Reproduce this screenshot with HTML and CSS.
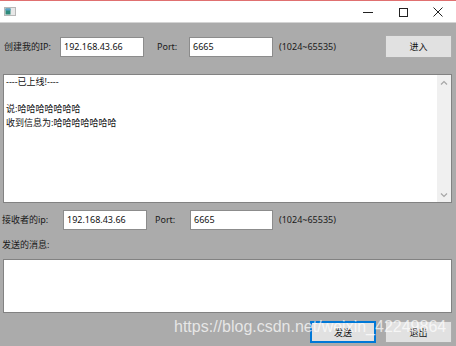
FILE: index.html
```html
<!DOCTYPE html>
<html>
<head>
<meta charset="utf-8">
<link rel="stylesheet" href="styles.css">
</head>
<body>
<div class="window">
  <div class="titlebar">
    <svg class="app-icon" width="12" height="9" viewBox="0 0 12 9">
      <rect x="0.5" y="0.5" width="11" height="8" fill="#e8e8e8" stroke="#b8b8b8"/>
      <rect x="1.5" y="1.5" width="5" height="6" fill="#2e8a7a"/>
      <rect x="1.5" y="1.5" width="5" height="2" fill="#5aa0c8"/>
    </svg>
    <div class="controls">
      <svg class="ctl" width="12" height="12" viewBox="0 0 12 12"><line x1="1" y1="6.5" x2="11" y2="6.5" stroke="#222" stroke-width="1"/></svg>
      <svg class="ctl" width="12" height="12" viewBox="0 0 12 12"><rect x="2.5" y="2.5" width="8" height="8" fill="none" stroke="#222" stroke-width="1"/></svg>
      <svg class="ctl" width="12" height="12" viewBox="0 0 12 12"><path d="M1.5 1.5 L10.5 10.5 M10.5 1.5 L1.5 10.5" stroke="#222" stroke-width="1"/></svg>
    </div>
  </div>
  <div class="client">
    <div class="row row-top">
      <span class="lbl lbl-my">创建我的IP:</span>
      <div class="field f-ip1">192.168.43.66</div>
      <span class="lbl lbl-port1">Port:</span>
      <div class="field f-port">6665</div>
      <span class="lbl range">(1024~65535)</span>
      <div class="btn btn-enter">进入</div>
    </div>
    <div class="log">
      <div class="log-text">
        <div>----已上线!----</div>
        <div>&nbsp;</div>
        <div>说:哈哈哈哈哈哈哈</div>
        <div>收到信息为:哈哈哈哈哈哈哈</div>
      </div>
      <div class="scrollbar">
        <svg width="8" height="6" viewBox="0 0 8 6"><path d="M1 4.5 L4 1.5 L7 4.5" fill="none" stroke="#a6a6a6" stroke-width="1.2"/></svg>
        <svg width="8" height="6" viewBox="0 0 8 6"><path d="M1 1.5 L4 4.5 L7 1.5" fill="none" stroke="#a6a6a6" stroke-width="1.2"/></svg>
      </div>
    </div>
    <div class="row row-recv">
      <span class="lbl lbl-recv">接收者的ip:</span>
      <div class="field f-ip2">192.168.43.66</div>
      <span class="lbl lbl-port2">Port:</span>
      <div class="field f-port2">6665</div>
      <span class="lbl range">(1024~65535)</span>
    </div>
    <div class="lbl msg-lbl">发送的消息:</div>
    <div class="msgbox"></div>
    <div class="actions">
      <div class="btn btn-send">发送</div>
      <div class="btn btn-exit">退出</div>
    </div>
  </div>
  <div class="watermark">https://blog.csdn.net/weixin_42249864</div>
</div>
</body>
</html>
```

FILE: styles.css
```css
* { box-sizing: border-box; }
html, body { margin: 0; padding: 0; }
body {
  width: 456px;
  height: 346px;
  overflow: hidden;
  font-family: "Noto Sans", "Noto Sans CJK SC", sans-serif;
  font-size: 9px;
  color: #1a1a1a;
}
.window {
  position: relative;
  width: 456px;
  height: 346px;
  background: #ababab;
}
.titlebar {
  height: 23px;
  background: #fff;
  border-top: 1px solid #e07070;
  border-bottom: 1px solid #d4d4d4;
  display: flex;
  align-items: center;
  padding-left: 4px;
}
.app-icon { display: block; margin-top: 0px; }
.controls {
  margin-left: auto;
  display: flex;
  align-items: center;
  gap: 23px;
  padding-right: 12px;
}
.ctl { display: block; }
.client {
  display: flex;
  flex-direction: column;
  padding: 0 4px 0 3px;
}
.row {
  display: flex;
  align-items: center;
}
.row-top { height: 23px; margin-top: 12px; }
.lbl { white-space: nowrap; line-height: 12px; }
.lbl-my { width: 57px; padding-left: 1px; }
.field {
  height: 20px;
  background: #fff;
  border: 1px solid #8c8c8c;
  padding-left: 3px;
  line-height: 18px;
  color: #111;
}
.f-ip1 { width: 84px; }
.lbl-port1 { margin-left: 13px; width: 32px; }
.f-port { width: 84px; }
.range { margin-left: 6px; }
.btn {
  height: 23px;
  background: #e1e1e1;
  border: 1px solid #adadad;
  display: flex;
  align-items: center;
  justify-content: center;
  color: #111;
}
.btn-enter { margin-left: auto; width: 67px; }
.log {
  margin-top: 16px;
  height: 129px;
  background: #fff;
  border: 1px solid #828282;
  display: flex;
}
.log-text {
  flex: 1;
  padding: 0 0 0 2px;
  line-height: 13.6px;
  padding-top: 0px;
  color: #111;
}
.scrollbar {
  width: 14px;
  background: #f0f0f0;
  display: flex;
  flex-direction: column;
  justify-content: space-between;
  align-items: center;
  padding: 5px 0 4px;
}
.scrollbar svg { display: block; }
.row-recv { height: 20px; margin-top: 7px; margin-left: -1px; }
.lbl-recv { width: 61px; }
.f-ip2 { width: 84px; }
.lbl-port2 { margin-left: 8px; width: 35px; }
.f-port2 { width: 83px; }
.msg-lbl { margin-top: 9px; margin-left: -1px; height: 12px; }
.msgbox {
  margin-top: 8px;
  height: 54px;
  background: #fff;
  border: 1px solid #828282;
}
.actions {
  margin-top: 8px;
  display: flex;
  justify-content: flex-end;
  gap: 9px;
}
.btn-send { width: 66px; height: 22px; border: 1px solid #0078d7; box-shadow: inset 0 0 0 1px #0078d7; }
.btn-exit { width: 67px; height: 22px; }
.watermark {
  position: absolute;
  left: 174px;
  top: 318px;
  font-family: "Liberation Sans", Arial, sans-serif;
  font-size: 16px;
  line-height: 18px;
  color: rgba(255, 255, 255, 0.72);
  white-space: nowrap;
}
```
